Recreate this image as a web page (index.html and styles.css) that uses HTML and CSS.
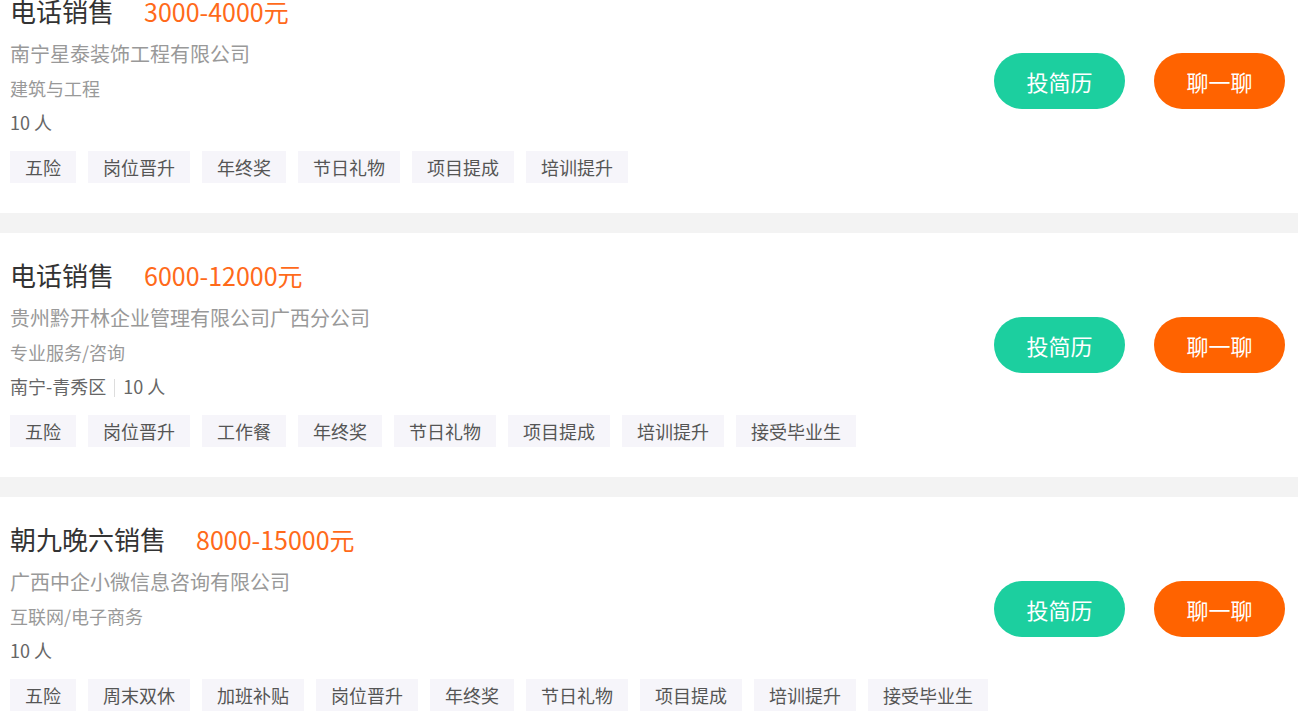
FILE: index.html
```html
<!DOCTYPE html>
<html lang="zh-CN">
<head>
    <meta charset="UTF-8">
    <meta name="viewport" content="width=device-width, initial-scale=1.0">
    <title>职位列表</title>
    <link rel="stylesheet" href="styles.css">
</head>
<body>

<main class="job-list">
    <div class="job-card">
        <div class="job-info">
            <div class="job-head">
                <span class="job-name">电话销售</span>
                <span class="job-salary">3000-4000元</span>
            </div>
            <p class="job-company">南宁星泰装饰工程有限公司</p>
            <p class="job-industry">建筑与工程</p>
            <p class="job-meta">10 人</p>
            <ul class="job-tags">
                <li>五险</li>
                <li>岗位晋升</li>
                <li>年终奖</li>
                <li>节日礼物</li>
                <li>项目提成</li>
                <li>培训提升</li>
            </ul>
        </div>
        <div class="job-actions">
            <button class="btn btn-resume">投简历</button>
            <button class="btn btn-chat">聊一聊</button>
        </div>
    </div>

    <div class="job-card">
        <div class="job-info">
            <div class="job-head">
                <span class="job-name">电话销售</span>
                <span class="job-salary">6000-12000元</span>
            </div>
            <p class="job-company">贵州黔开林企业管理有限公司广西分公司</p>
            <p class="job-industry">专业服务/咨询</p>
            <p class="job-meta">南宁-青秀区<span class="sep"></span>10 人</p>
            <ul class="job-tags">
                <li>五险</li>
                <li>岗位晋升</li>
                <li>工作餐</li>
                <li>年终奖</li>
                <li>节日礼物</li>
                <li>项目提成</li>
                <li>培训提升</li>
                <li>接受毕业生</li>
            </ul>
        </div>
        <div class="job-actions">
            <button class="btn btn-resume">投简历</button>
            <button class="btn btn-chat">聊一聊</button>
        </div>
    </div>

    <div class="job-card">
        <div class="job-info">
            <div class="job-head">
                <span class="job-name">朝九晚六销售</span>
                <span class="job-salary">8000-15000元</span>
            </div>
            <p class="job-company">广西中企小微信息咨询有限公司</p>
            <p class="job-industry">互联网/电子商务</p>
            <p class="job-meta">10 人</p>
            <ul class="job-tags">
                <li>五险</li>
                <li>周末双休</li>
                <li>加班补贴</li>
                <li>岗位晋升</li>
                <li>年终奖</li>
                <li>节日礼物</li>
                <li>项目提成</li>
                <li>培训提升</li>
                <li>接受毕业生</li>
            </ul>
        </div>
        <div class="job-actions">
            <button class="btn btn-resume">投简历</button>
            <button class="btn btn-chat">聊一聊</button>
        </div>
    </div>
</main>

</body>
</html>
```

FILE: styles.css
```css
body {
    font-family: "Noto Sans CJK SC", "Noto Sans", sans-serif;
    margin: 0;
    padding: 0;
    background-color: #f3f3f3;
    overflow: hidden;
}
.job-list {
    margin-top: -31px;
}
.job-card {
    display: flex;
    justify-content: space-between;
    background-color: white;
    padding: 22px 13px 30px 10px;
    margin-bottom: 20px;
}
.job-head {
    display: flex;
    align-items: baseline;
    height: 40px;
    line-height: 40px;
}
.job-name {
    font-size: 26px;
    color: #333;
}
.job-salary {
    font-size: 25px;
    color: #ff6a1a;
    margin-left: 30px;
}
.job-info p {
    margin: 0;
    font-size: 18px;
    line-height: 34px;
}
.job-company {
    margin-top: 6px !important;
    font-size: 20px !important;
    color: #999;
}
.job-industry {
    color: #999;
}
.job-meta {
    color: #666;
}
.sep {
    display: inline-block;
    width: 1px;
    height: 18px;
    background-color: #ddd;
    margin: 0 8px;
    vertical-align: -3px;
}
.job-tags {
    display: flex;
    gap: 12px;
    list-style: none;
    margin: 12px 0 0;
    padding: 0;
}
.job-tags li {
    background-color: #f6f5fa;
    color: #555;
    font-size: 18px;
    height: 32px;
    line-height: 32px;
    padding: 0 15px;
}
.job-actions {
    display: flex;
    gap: 29px;
    align-self: flex-start;
    margin-top: 62px;
}
.btn {
    width: 131px;
    height: 56px;
    border: none;
    border-radius: 28px;
    color: white;
    font-size: 22px;
    font-family: inherit;
    cursor: pointer;
}
.btn-resume {
    background-color: #1ccf9f;
}
.btn-chat {
    background-color: #ff6300;
}
```
